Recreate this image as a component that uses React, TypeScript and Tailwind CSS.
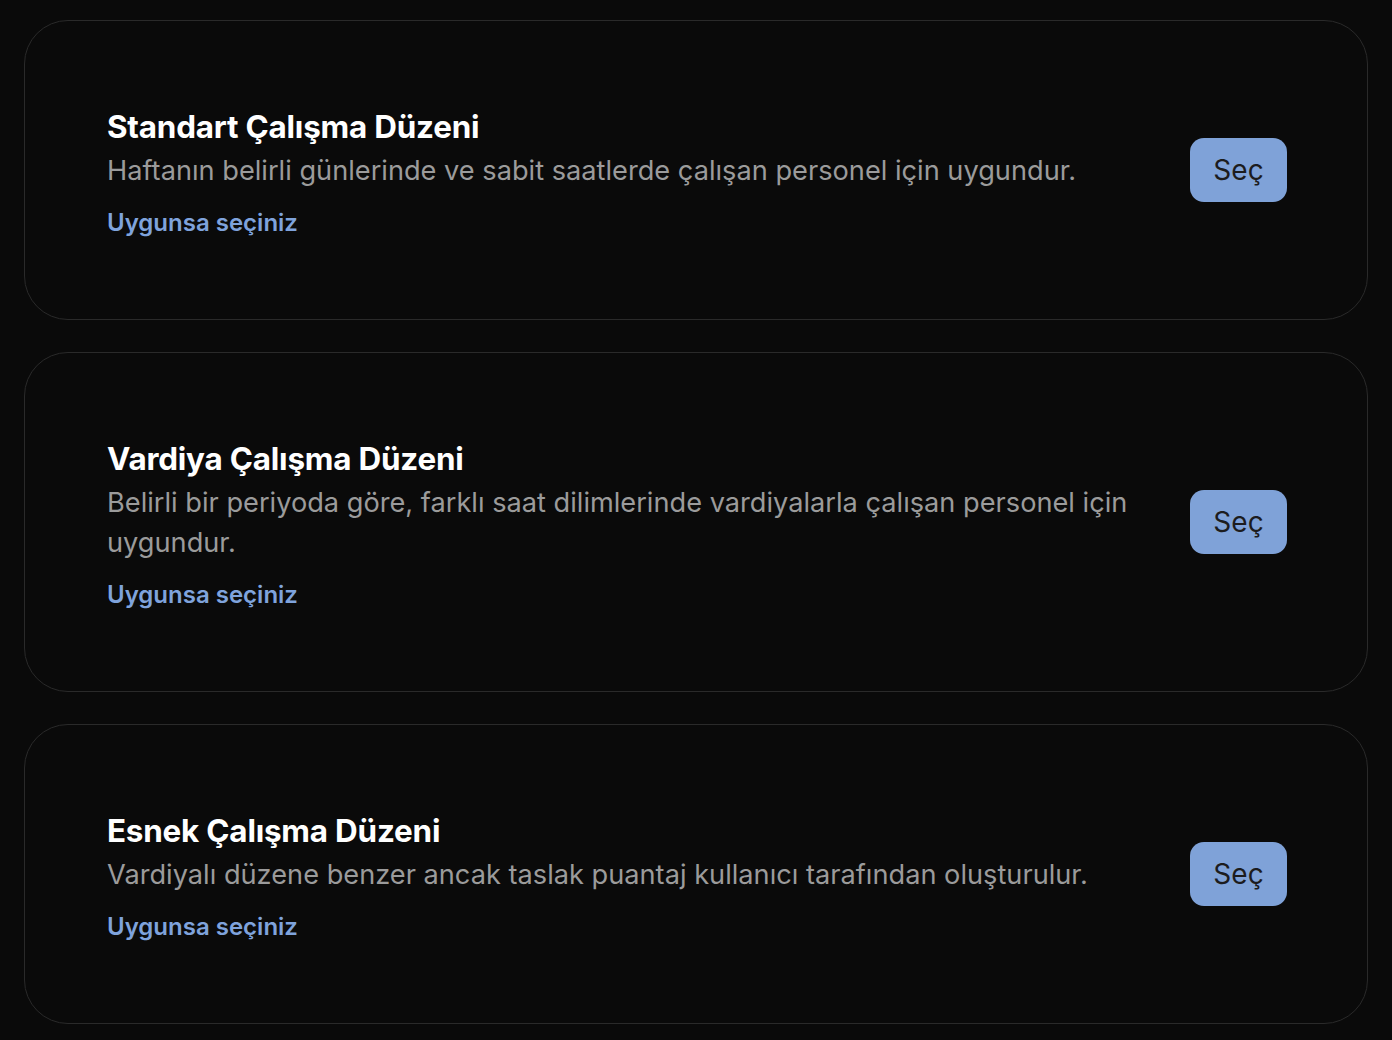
import React from "react";

const items = [
  {
    title: "Standart Çalışma Düzeni",
    desc: "Haftanın belirli günlerinde ve sabit saatlerde çalışan personel için uygundur.",
  },
  {
    title: "Vardiya Çalışma Düzeni",
    desc: "Belirli bir periyoda göre, farklı saat dilimlerinde vardiyalarla çalışan personel için uygundur.",
  },
  {
    title: "Esnek Çalışma Düzeni",
    desc: "Vardiyalı düzene benzer ancak taslak puantaj kullanıcı tarafından oluşturulur.",
  },
];

export default function App() {
  return (
    <div
      className="min-h-[1040px] bg-[#0a0a0a] px-[24px] pt-[20px] pb-[16px] flex flex-col gap-[32px]"
      style={{ fontFamily: "Inter, 'Noto Sans', sans-serif" }}
    >
      {items.map((it) => (
        <div
          key={it.title}
          className="rounded-[44px] border border-[#2a2a2a] bg-[#0a0a0a] pl-[82px] pr-[80px] pt-[88px] pb-[80px] flex items-center gap-[40px]"
        >
          <div className="flex-1 min-w-0">
            <div className="text-[31.4px] leading-[37px] font-bold text-white tracking-[-0.2px] mb-[5px]">
              {it.title}
            </div>
            <div className="text-[27.2px] leading-[40px] text-[#9b9b9b] max-w-[1030px]">
              {it.desc}
            </div>
            <div className="mt-[16px] text-[24px] leading-[32px] font-semibold text-[#7fa3dc]">
              Uygunsa seçiniz
            </div>
          </div>
          <button className="w-[97px] h-[64px] mb-[8px] rounded-[14px] bg-[#7fa2d8] text-[#1c1c1e] text-[28px] flex items-center justify-center shrink-0">
            Seç
          </button>
        </div>
      ))}
    </div>
  );
}
